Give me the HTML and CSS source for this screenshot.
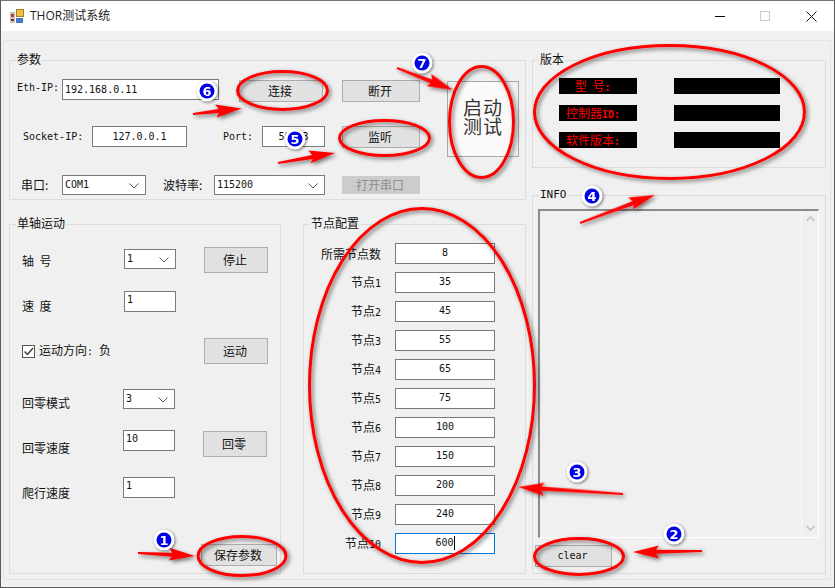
FILE: index.html
```html
<!DOCTYPE html>
<html lang="zh">
<head>
<meta charset="utf-8">
<title>THOR测试系统</title>
<link rel="stylesheet" href="styles.css">
</head>
<body>
<div class="window">
  <header class="titlebar">
    <svg class="app-icon" width="14" height="14" viewBox="0 0 14 14"><rect x="0" y="3" width="5" height="11" fill="#c4c4c4"/><rect x="1" y="5" width="3" height="3" fill="#c0392b"/><rect x="1" y="10" width="3" height="2" fill="#8a2a20"/><rect x="6.5" y=".5" width="7" height="7" fill="#f0c040" stroke="#a08030"/><rect x="6" y="9" width="7" height="5" fill="#4a78c8"/></svg>
    <span class="title-text">THOR测试系统</span>
    <div class="win-controls">
      <svg width="11" height="11" viewBox="0 0 11 11"><path d="M0 5.5H10" stroke="#000" fill="none"/></svg>
      <svg class="win-max" width="11" height="11" viewBox="0 0 11 11"><rect x=".5" y=".5" width="9" height="9" stroke="#ccc" fill="none"/></svg>
      <svg width="11" height="11" viewBox="0 0 11 11"><path d="M.5 .5L10.5 10.5M10.5 .5L.5 10.5" stroke="#111" fill="none"/></svg>
    </div>
  </header>

  <div class="client">
  <main class="panel">
    <div class="col-left">
      <section class="group group-params">
        <h2 class="group-title">参数</h2>
        <div class="params-body">
          <div class="params-rows">
            <div class="prow prow1">
              <span class="lbl lat w-eth">Eth-IP:</span>
              <div class="field lat left w-ip">192.168.0.11</div>
              <button class="btn w-conn">连接</button>
              <button class="btn w-78">断开</button>
            </div>
            <div class="prow prow2">
              <span class="lbl lat w-sock">Socket-IP:</span>
              <div class="field lat w-sip">127.0.0.1</div>
              <span class="lbl lat w-port">Port:</span>
              <div class="field lat w-pnum">50003</div>
              <button class="btn w-78 btn-mon">监听</button>
            </div>
            <div class="prow prow3">
              <span class="lbl w-ser">串口:</span>
              <div class="combo w-com"><span class="lat">COM1</span><svg class="chev" width="10" height="6" viewBox="0 0 10 6"><path d="M.5 .5L5 5L9.5 .5" fill="none" stroke="#555"/></svg></div>
              <span class="lbl w-baud">波特率:</span>
              <div class="combo w-rate"><span class="lat">115200</span><svg class="chev" width="10" height="6" viewBox="0 0 10 6"><path d="M.5 .5L5 5L9.5 .5" fill="none" stroke="#555"/></svg></div>
              <button class="btn btn-off w-78">打开串口</button>
            </div>
          </div>
          <button class="btn-start">启动<br>测试</button>
        </div>
      </section>

      <div class="lower">
        <section class="group group-axis">
          <h2 class="group-title">单轴运动</h2>
          <div class="axis-row axis-a">
            <span class="lbl axis-lbl">轴&nbsp;&nbsp;号</span>
            <div class="combo w-52"><span class="lat">1</span><svg class="chev" width="10" height="6" viewBox="0 0 10 6"><path d="M.5 .5L5 5L9.5 .5" fill="none" stroke="#555"/></svg></div>
            <button class="btn btn-axis">停止</button>
          </div>
          <div class="axis-row axis-b">
            <span class="lbl axis-lbl">速&nbsp;&nbsp;度</span>
            <div class="field lat left tall w-52">1</div>
          </div>
          <div class="axis-row axis-c">
            <span class="check"><svg width="11" height="11" viewBox="0 0 11 11"><path d="M1.5 5.5L4.5 8.5L10 2" fill="none" stroke="#333" stroke-width="1.3"/></svg></span>
            <span class="lbl check-lbl">运动方向<span class="lat pre">: </span>负</span>
            <button class="btn btn-axis">运动</button>
          </div>
          <div class="axis-row axis-d">
            <span class="lbl axis-lbl2">回零模式</span>
            <div class="combo w-52"><span class="lat">3</span><svg class="chev" width="10" height="6" viewBox="0 0 10 6"><path d="M.5 .5L5 5L9.5 .5" fill="none" stroke="#555"/></svg></div>
          </div>
          <div class="axis-row axis-e">
            <span class="lbl axis-lbl2">回零速度</span>
            <div class="field lat left tall w-52">10</div>
            <button class="btn btn-axis btn-home">回零</button>
          </div>
          <div class="axis-row axis-f">
            <span class="lbl axis-lbl2">爬行速度</span>
            <div class="field lat left tall w-52">1</div>
          </div>
          <div class="axis-save"><button class="btn btn-save">保存参数</button></div>
        </section>

        <section class="group group-nodes">
          <h2 class="group-title">节点配置</h2>
          <div class="node-grid">
            <span class="lbl node-lbl">所需节点数</span><div class="field lat node-field">8</div>
            <span class="lbl node-lbl">节点<span class="lat">1</span></span><div class="field lat node-field">35</div>
            <span class="lbl node-lbl">节点<span class="lat">2</span></span><div class="field lat node-field">45</div>
            <span class="lbl node-lbl">节点<span class="lat">3</span></span><div class="field lat node-field">55</div>
            <span class="lbl node-lbl">节点<span class="lat">4</span></span><div class="field lat node-field">65</div>
            <span class="lbl node-lbl">节点<span class="lat">5</span></span><div class="field lat node-field">75</div>
            <span class="lbl node-lbl">节点<span class="lat">6</span></span><div class="field lat node-field">100</div>
            <span class="lbl node-lbl">节点<span class="lat">7</span></span><div class="field lat node-field">150</div>
            <span class="lbl node-lbl">节点<span class="lat">8</span></span><div class="field lat node-field">200</div>
            <span class="lbl node-lbl">节点<span class="lat">9</span></span><div class="field lat node-field">240</div>
            <span class="lbl node-lbl">节点<span class="lat">10</span></span><div class="field lat node-field focus"><span class="caret-text">600</span></div>
          </div>
        </section>
      </div>
    </div>

    <div class="col-right">
      <section class="group group-ver">
        <h2 class="group-title">版本</h2>
        <div class="ver-grid">
          <div class="led"><span class="led-a">型&nbsp;&nbsp;号<span class="lat-led">:</span></span></div><div class="led"></div>
          <div class="led"><span class="led-b">控制器<span class="lat-led">ID:</span></span></div><div class="led"></div>
          <div class="led"><span class="led-b">软件版本<span class="lat-led">:</span></span></div><div class="led"></div>
        </div>
      </section>
      <section class="group group-info">
        <h2 class="group-title lat-title">INFO</h2>
        <div class="log">
          <div class="scroll">
            <svg width="9" height="6" viewBox="0 0 9 6"><path d="M.5 5L4.5 1L8.5 5" fill="none" stroke="#c4c4c4" stroke-width="1.6"/></svg>
            <svg width="9" height="6" viewBox="0 0 9 6"><path d="M.5 1L4.5 5L8.5 1" fill="none" stroke="#c4c4c4" stroke-width="1.6"/></svg>
          </div>
        </div>
        <button class="btn btn-clear lat">clear</button>
      </section>
    </div>
  </main>
  </div>

  <svg class="marks" width="835" height="588" viewBox="0 0 835 588">
    <defs>
      <filter id="sh" x="-20%" y="-20%" width="140%" height="140%"><feDropShadow dx="2" dy="2" stdDeviation="2" flood-color="#000" flood-opacity=".55"/></filter>
    </defs>
    <g filter="url(#sh)" fill="none" stroke="#f00" stroke-width="3">
      <ellipse cx="282.5" cy="90.5" rx="45" ry="19"/>
      <ellipse cx="384.5" cy="138" rx="45" ry="17.5"/>
      <ellipse cx="481.5" cy="122" rx="32" ry="55.5"/>
      <ellipse cx="669.5" cy="112" rx="135" ry="66.5"/>
      <ellipse cx="422" cy="385.5" rx="112.5" ry="177"/>
      <ellipse cx="242" cy="556" rx="44" ry="19.5"/>
      <ellipse cx="579" cy="556.5" rx="44.5" ry="18"/>
    </g>
    <g filter="url(#sh)" fill="#f00">
      <polygon transform="translate(193 114) rotate(-6.4)" points="0,-1 26,-2 23,-7 49,0 23,6 26,2 0,1"/>
      <polygon transform="translate(278 163) rotate(-10)" points="0,-1 35,-2 32,-7 58,0 32,6 35,2 0,1"/>
      <polygon transform="translate(397 68) rotate(21.4)" points="0,-1 37,-2 34,-7 60,0 34,6 37,2 0,1"/>
      <polygon transform="translate(580 223) rotate(-20.5)" points="0,-1 57,-2 54,-7 80,0 54,6 57,2 0,1"/>
      <polygon transform="translate(623 494) rotate(183.8)" points="0,-1 82,-2 79,-7 105,0 79,6 82,2 0,1"/>
      <polygon transform="translate(702 551) rotate(179.2)" points="0,-1 46,-2 43,-7 69,0 43,6 46,2 0,1"/>
      <polygon transform="translate(138 553) rotate(3)" points="0,-1 34,-2 31,-7 57,0 31,6 34,2 0,1"/>
    </g>
    <g class="badge" transform="translate(164 540)"><circle class="b-o" r="10.5"/><circle class="b-i" r="7.5"/><text y="4.5">1</text></g>
    <g class="badge" transform="translate(674 534)"><circle class="b-o" r="10.5"/><circle class="b-i" r="7.5"/><text y="4.5">2</text></g>
    <g class="badge" transform="translate(577 472)"><circle class="b-o" r="10.5"/><circle class="b-i" r="7.5"/><text y="4.5">3</text></g>
    <g class="badge" transform="translate(592 196)"><circle class="b-o" r="10.5"/><circle class="b-i" r="7.5"/><text y="4.5">4</text></g>
    <g class="badge" transform="translate(295 139)"><circle class="b-o" r="10.5"/><circle class="b-i" r="7.5"/><text y="4.5">5</text></g>
    <g class="badge" transform="translate(207 91)"><circle class="b-o" r="10.5"/><circle class="b-i" r="7.5"/><text y="4.5">6</text></g>
    <g class="badge" transform="translate(422 63)"><circle class="b-o" r="10.5"/><circle class="b-i" r="7.5"/><text y="4.5">7</text></g>
  </svg>
</div>
</body>
</html>
```
FILE: styles.css
```css
* { box-sizing: border-box; }
html, body { margin: 0; padding: 0; }
body { width: 835px; height: 588px; overflow: hidden; background: #f0f0f0; }

.window {
  position: relative;
  width: 835px;
  height: 588px;
  display: flex;
  flex-direction: column;
  background: #f0f0f0;
  border: 1px solid #5a5a5a;
  border-top-color: #777;
  font: 12px/16px "Noto Sans CJK SC", sans-serif;
  color: #111;
}

.titlebar {
  flex: none;
  height: 30px;
  display: flex;
  align-items: center;
  background: #fff;
  padding-left: 9px;
}
.app-icon { display: block; margin-right: 6px; }
.title-text { font: 12px/16px "Open Sans", "Noto Sans CJK SC", sans-serif; color: #222; }
.win-controls { margin-left: auto; display: flex; gap: 34px; padding-right: 17px; }
.win-controls svg { display: block; }
.win-max { margin-right: 1px; }

.client { flex: 1; display: flex; padding: 9px 3px 7px 2px; }
.panel {
  flex: 1;
  display: flex;
  gap: 6px;
  border: 1px solid #e4e4e4;
  padding: 19px 0 5px 5px;
}
.col-left { width: 517px; display: flex; flex-direction: column; gap: 24px; }
.col-right { width: 294px; display: flex; flex-direction: column; gap: 27px; }

.group { border: 1px solid #dcdcdc; position: relative; }
.group-title {
  margin: -10px 0 0 6px;
  padding: 0 1px 1px;
  width: max-content;
  background: #f0f0f0;
  font: 12px/16px "Noto Sans CJK SC", sans-serif;
  color: #111;
}
.lat-title { font: 11px/16px "DejaVu Sans Mono", monospace; padding: 1px 1px 0; }

.lat { font: 10px/16px "DejaVu Sans Mono", monospace; }
.pre { white-space: pre; }
.lbl { flex: none; white-space: nowrap; }

.field {
  flex: none;
  height: 21px;
  border: 1px solid #7a7a7a;
  background: #fff;
  display: flex;
  align-items: center;
  justify-content: center;
}
.field.left { justify-content: flex-start; padding-left: 2px; }
.field.tall { align-items: flex-start; }
.combo {
  flex: none;
  height: 20px;
  border: 1px solid #7a7a7a;
  background: #fff;
  display: flex;
  align-items: center;
  padding: 0 6px 0 2px;
  justify-content: space-between;
}
.chev { display: block; margin-top: 2px; }

.btn {
  flex: none;
  height: 22px;
  padding: 0 2px 0 0;
  border: 1px solid #adadad;
  border-radius: 0;
  background: #e1e1e1;
  font: 12px/16px "Noto Sans CJK SC", sans-serif;
  color: #111;
}
.btn.lat { font: 10px/16px "DejaVu Sans Mono", monospace; }
.btn-off { height: 18px; background: #ccc; border-color: #ccc; color: #8f8f8f; }
.w-78 { width: 78px; }

/* 参数 */
.group-params { height: 140px; }
.params-body { display: flex; }
.params-rows { width: 412px; }
.prow { display: flex; align-items: center; }
.prow1 { height: 23px; margin-top: 11px; align-items: flex-start; }
.prow1 .lbl { padding-top: 1px; }
.prow1 .btn { margin-top: 1px; }
.prow2 { height: 21px; margin-top: 24px; }
.prow3 { height: 20px; margin-top: 28px; }
.w-eth { width: 45px; margin-left: 7px; }
.w-ip { width: 157px; }
.w-conn { width: 84px; margin-left: 20px; margin-right: 19px; }
.w-sock { width: 69px; margin-left: 13px; }
.w-sip { width: 95px; }
.w-port { width: 39px; margin-left: 36px; }
.w-pnum { width: 63px; }
.btn-mon { margin-left: 17px; }
.w-ser { width: 41px; margin-left: 11px; }
.w-com { width: 84px; }
.w-baud { width: 51px; margin-left: 17px; }
.w-rate { width: 111px; }
.prow3 .btn-off { margin-left: 17px; }
.btn-start {
  flex: none;
  width: 72px;
  height: 76px;
  margin: 13px 0 0 25px;
  padding: 0 0 6px;
  border: 1px solid #a8a8a8;
  background: radial-gradient(ellipse 32px 55px at 34px 40px, #fcfaf8 98%, #f0f0f0 100%);
  font: 19px/19px "Noto Sans CJK SC", sans-serif;
  letter-spacing: 1px;
  color: #333;
}

/* lower */
.lower { flex: 1; display: flex; gap: 22px; }
.group-axis { width: 272px; display: flex; flex-direction: column; }
.group-nodes { flex: 1; }

.axis-row { display: flex; align-items: flex-start; padding-left: 12px; }
.axis-lbl { width: 102px; }
.axis-lbl2 { width: 101px; }
.w-52 { width: 52px; }
.btn-axis { width: 64px; height: 26px; margin-left: 28px; }
.axis-a { height: 26px; margin-top: 15px; }
.axis-a .combo { margin-top: 2px; }
.axis-a .lbl { margin-top: 6px; }
.axis-b { height: 21px; margin-top: 18px; }
.axis-b .lbl { margin-top: 7px; }
.axis-c { height: 26px; margin-top: 26px; align-items: center; }
.axis-d { height: 20px; margin-top: 25px; }
.axis-d .lbl { margin-top: 6px; }
.axis-e { height: 27px; margin-top: 21px; }
.axis-e .lbl { margin-top: 10px; }
.btn-home { margin-top: 1px; }
.axis-f { height: 21px; margin-top: 20px; }
.axis-f .lbl { margin-top: 8px; }
.axis-save { margin-top: 46px; padding-left: 191px; }
.btn-save { width: 76px; }
.check {
  flex: none;
  width: 13px; height: 13px;
  border: 1px solid #555;
  background: #fff;
  display: flex; align-items: center; justify-content: center;
}
.check svg { display: block; }
.check-lbl { width: 169px; padding-left: 4px; }
.axis-c .btn-axis { margin-left: 0; }

.node-grid {
  display: grid;
  grid-template-columns: 77px 100px;
  column-gap: 14px;
  grid-auto-rows: 21px;
  row-gap: 8px;
  margin: 11px 0 0 0;
  align-items: center;
}
.node-lbl { text-align: right; }
.node-field { height: 21px; padding-bottom: 1px; }
.focus { border-color: #0078d7; }
.caret-text { border-right: 1px solid #000; line-height: 14px; }

/* 版本 */
.group-ver { height: 108px; }
.ver-grid {
  display: grid;
  grid-template-columns: 78px 106px;
  column-gap: 37px;
  grid-auto-rows: 16px;
  row-gap: 11px;
  margin: 10px 0 0 26px;
}
.led {
  background: #000;
  color: #f00;
  font: 12px/16px "Noto Sans CJK SC", sans-serif;
  white-space: nowrap;
}
.lat-led { font: 10px/16px "DejaVu Sans Mono", monospace; font-weight: 700; }
.led-a { margin-left: 16px; }
.led-b { margin-left: 7px; }

/* INFO */
.group-info { flex: 1; }
.log {
  margin: 6px 6px 0 5px;
  height: 329px;
  background: #f0f0f0;
  border: 1px solid #fff;
  border-top: 2px solid #8a8a8a;
  border-left: 2px solid #8a8a8a;
  display: flex;
  justify-content: flex-end;
}
.scroll {
  width: 17px;
  border-left: 1px solid #fafafa;
  display: flex;
  flex-direction: column;
  justify-content: space-between;
  align-items: center;
  padding: 5px 0 6px;
}
.scroll svg { display: block; }
.btn-clear { display: block; width: 77px; margin: 7px 0 0 2px; }

/* annotations lying over the window */
.marks { position: absolute; left: -1px; top: -1px; pointer-events: none; }
.b-o { fill: #fff; filter: drop-shadow(1px 1px 1.5px rgba(0,0,0,.5)); }
.b-i { fill: #0000e6; }
.badge text {
  fill: #fff;
  font: 700 13px "DejaVu Sans", sans-serif;
  text-anchor: middle;
}
```
